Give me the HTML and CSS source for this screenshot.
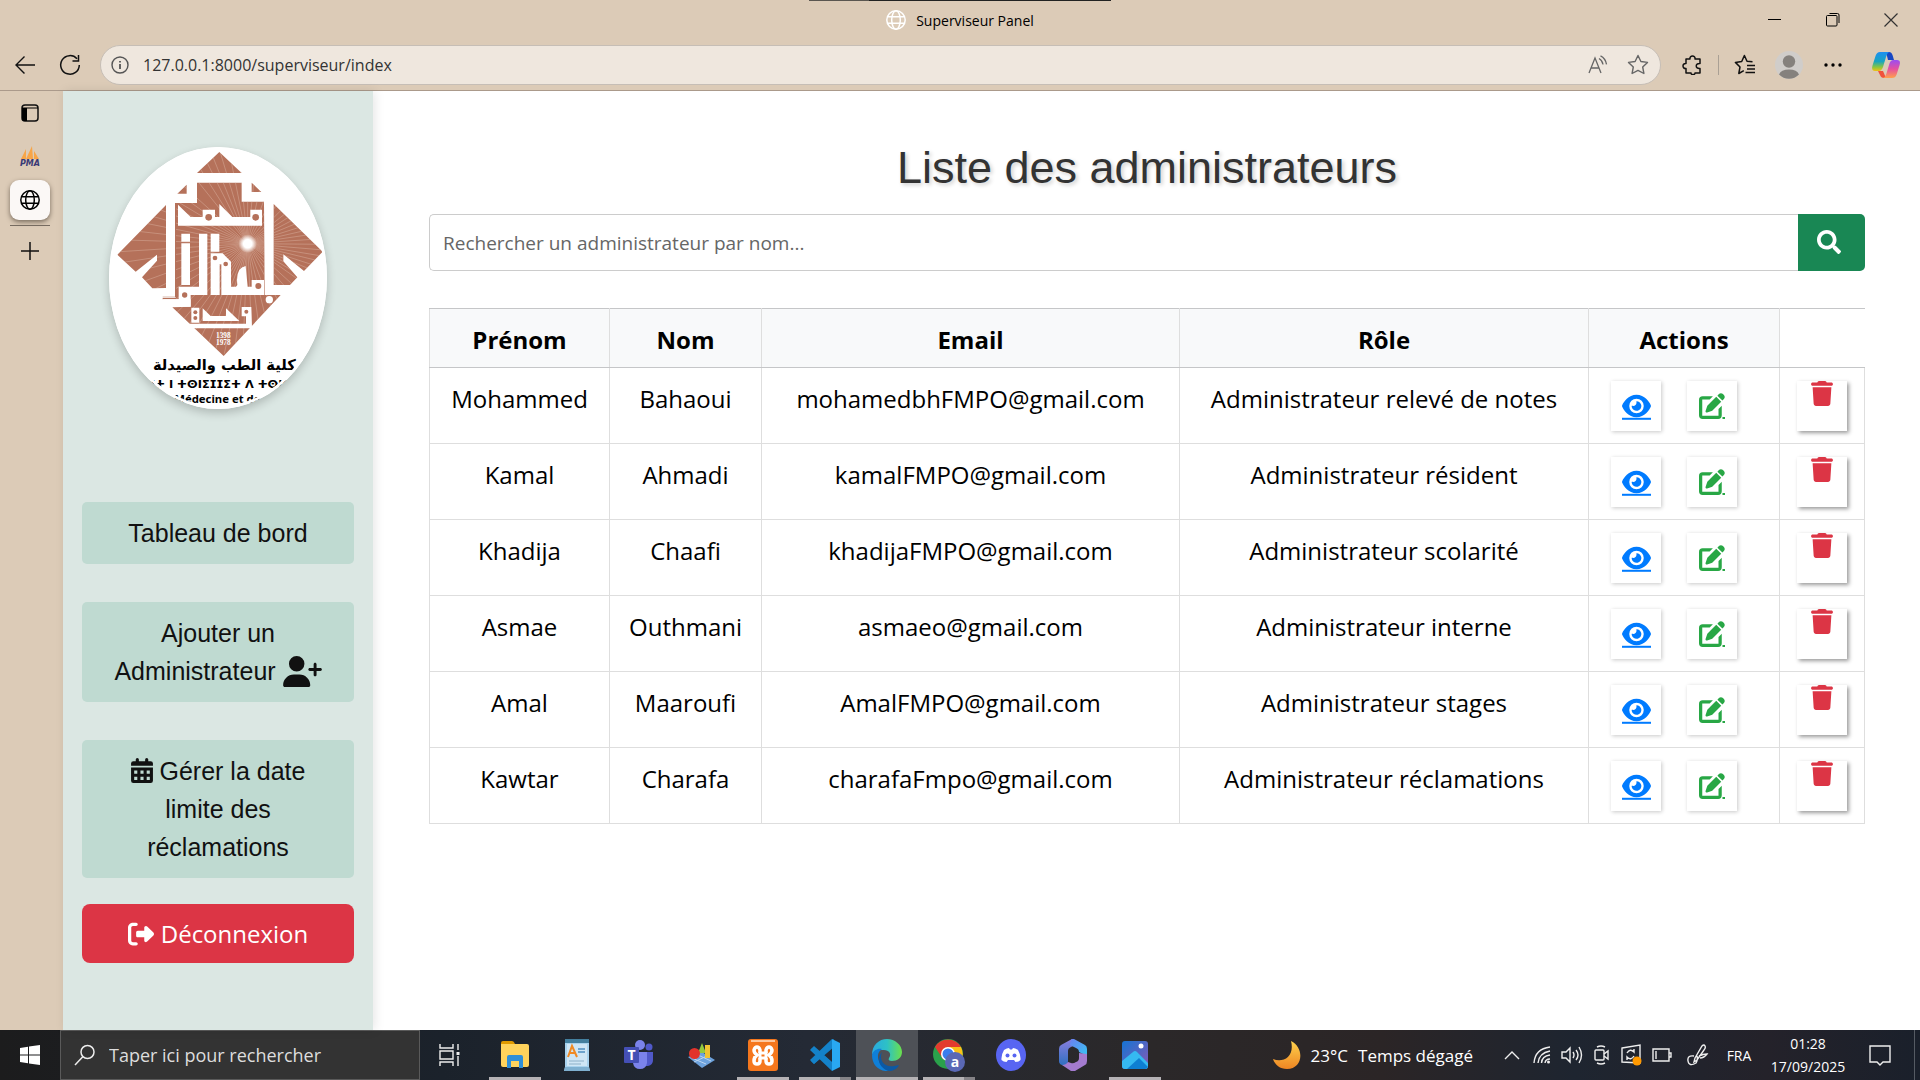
FILE: index.html
```html
<!DOCTYPE html>
<html lang="fr">
<head>
<meta charset="utf-8">
<meta name="viewport" content="width=device-width, initial-scale=1">
<title>Superviseur Panel</title>
<link rel="stylesheet" href="styles.css">
</head>
<body>
<svg class="sprite" aria-hidden="true">
  <symbol id="eye" viewBox="0 0 576 512"><path d="M288 32c-80.800 0-145.500 36.800-192.600 80.600C48.600 156 17.300 208 2.500 243.700c-3.300 7.900-3.300 16.700 0 24.600C17.300 304 48.600 356 95.400 399.400C142.500 443.200 207.200 480 288 480s145.500-36.800 192.600-80.600c46.800-43.500 78.100-95.400 93-131.100c3.300-7.900 3.300-16.700 0-24.600c-14.900-35.700-46.200-87.700-93-131.100C433.500 68.800 368.800 32 288 32zM144 256a144 144 0 1 1 288 0 144 144 0 1 1 -288 0zm144-64c0 35.300-28.700 64-64 64c-7.100 0-13.900-1.200-20.300-3.300c-5.500-1.800-11.900 1.600-11.700 7.400c.3 6.900 1.300 13.800 3.200 20.700c13.700 51.200 66.400 81.600 117.600 67.900s81.600-66.400 67.900-117.600c-11.100-41.500-47.800-69.400-88.600-71.100c-5.800-.2-9.200 6.100-7.400 11.700c2.100 6.400 3.300 13.200 3.300 20.300z"/><path d="M0 490h576v40H0z"/></symbol>
  <symbol id="edit" viewBox="0 0 512 512"><path d="M471.600 21.700c-21.900-21.900-57.300-21.900-79.200 0L362.300 51.700l97.900 97.900 30.100-30.100c21.900-21.900 21.900-57.300 0-79.200L471.600 21.700zm-299.200 220c-6.100 6.100-10.800 13.600-13.500 21.900l-29.600 88.800c-2.900 8.600-.6 18.100 5.800 24.600s15.900 8.700 24.600 5.800l88.800-29.600c8.200-2.700 15.700-7.400 21.900-13.500L437.700 172.300 339.700 74.300 172.400 241.700zM72 64Q0 64 0 136V440q0 72 72 72H376q72 0 72-72V250l-64 64V448H64V128H210l64-64z"/><path d="M462 472h50v40h-50z"/></symbol>
  <symbol id="trash" viewBox="0 0 448 512"><path d="M135.200 17.700L128 32H32C14.300 32 0 46.300 0 64S14.300 96 32 96H416c17.700 0 32-14.300 32-32s-14.300-32-32-32H320l-7.200-14.300C307.400 6.800 296.300 0 284.200 0H163.800c-12.100 0-23.200 6.800-28.600 17.700zM416 128H32L53.200 467c1.600 25.300 22.600 45 47.900 45H346.900c25.300 0 46.300-19.700 47.900-45L416 128z"/></symbol>
  <symbol id="globe" viewBox="0 0 20 20"><g fill="none" stroke="currentColor" stroke-width="1.500"><circle cx="10" cy="10" r="9.200"/><ellipse cx="10" cy="10" rx="4.300" ry="9.200"/><path d="M1.500 6.800h17M1.500 13.200h17"/></g></symbol>
</svg>

<header class="browser">
  <div class="titlebar">
    <div class="top-edge"></div>
    <div class="window-title"><svg width="20" height="20"><use href="#globe"/></svg><span>Superviseur Panel</span></div>
    <div class="window-controls">
      <button aria-label="Réduire"><svg width="14" height="14" viewBox="0 0 14 14"><path d="M0 6.500h13" stroke="#000"/></svg></button>
      <button aria-label="Restaurer"><svg width="14" height="14" viewBox="0 0 14 14" fill="none" stroke="#000"><rect x=".5" y="2.500" width="10.500" height="10.500" rx="1"/><path d="M3.500.5h8q1.500 0 1.500 1.500v8"/></svg></button>
      <button aria-label="Fermer"><svg width="14" height="14" viewBox="0 0 14 14"><path d="M.5.5l13 13M13.500.5l-13 13" stroke="#333" stroke-width="1.200"/></svg></button>
    </div>
  </div>
  <div class="toolbar">
    <button class="nav-back" aria-label="Retour"><svg width="22" height="20" viewBox="0 0 22 20" fill="none" stroke="#111" stroke-width="1.400"><path d="M21 10H2M10.500 1.500L2 10l8.500 8.500"/></svg></button>
    <button class="nav-reload" aria-label="Actualiser"><svg width="22" height="22" viewBox="0 0 22 22" fill="none" stroke="#111" stroke-width="1.500"><path d="M20.300 11a9.300 9.300 0 1 1-2.300-6.200M19.500 1v6h-6"/></svg></button>
    <div class="address">
      <svg width="18" height="18" viewBox="0 0 18 18" fill="none" stroke="#555" stroke-width="1.400"><circle cx="9" cy="9" r="8"/><path d="M9 8v5M9 5v1.600" stroke-width="1.800"/></svg>
      <input class="url" type="text" aria-label="Adresse" value="127.0.0.1:8000/superviseur/index">
      <button aria-label="Lecture à voix haute"><svg width="20" height="20" viewBox="0 0 20 20" fill="none" stroke="#666" stroke-width="1.300"><path d="M1 18L7 3l6 15M3 13h8M11 3.500q3.500 2 4 6M12.500.8q5 2.400 6 8.500"/></svg></button>
      <button aria-label="Ajouter aux favoris"><svg width="22" height="22" viewBox="0 0 22 22" fill="none" stroke="#666" stroke-width="1.400" stroke-linejoin="round"><path d="M11 1.500l2.900 6 6.600.9-4.800 4.600 1.200 6.500L11 16.400l-5.900 3.100L6.300 13 1.500 8.400l6.600-.9z"/></svg></button>
    </div>
    <div class="tools">
      <button aria-label="Extensions"><svg width="20" height="20" viewBox="0 0 20 20" fill="none" stroke="#111" stroke-width="1.500" stroke-linejoin="round"><path d="M4 4h4c-.7-4 5.700-4 5 0h5v4.500c-5-.6-5 5.600 0 5V18h-5c.5 2.200-4.500 2.200-4 0H4v-4.500c-4 .5-4-5.500 0-5z"/></svg></button>
      <span class="divider"></span>
      <button aria-label="Favoris"><svg width="22" height="22" viewBox="0 0 22 22" fill="none" stroke="#111" stroke-width="1.500" stroke-linejoin="round"><path d="M18.500 7.800L13 7.300l-2.600-5.800-2.700 6-6.300.9L6 13l-1.200 6.500 5-2.800M13 11.500h8M13 15h8M11.500 18.500H21"/></svg></button>
      <button aria-label="Profil"><svg width="28" height="28" viewBox="0 0 28 28"><circle cx="14" cy="14" r="14" fill="#d0cdca"/><circle cx="14" cy="10.500" r="6.200" fill="#85817d"/><path d="M4 23.500q2-5 10-5t10 5a14 14 0 0 1-20 0z" fill="#85817d"/></svg></button>
      <button aria-label="Paramètres"><svg width="18" height="4" viewBox="0 0 18 4"><circle cx="2" cy="2" r="1.700"/><circle cx="9" cy="2" r="1.700"/><circle cx="16" cy="2" r="1.700"/></svg></button>
      <button class="copilot" aria-label="Copilot"><svg width="28" height="27" viewBox="0 0 28 27">
        <defs><linearGradient id="cpA" x1="0" y1="0" x2="0" y2="1"><stop offset="0" stop-color="#1d8ff2"/><stop offset=".5" stop-color="#18a5c0"/><stop offset=".8" stop-color="#8cc63f"/><stop offset="1" stop-color="#f2c014"/></linearGradient><linearGradient id="cpB" x1="0" y1="0" x2="0" y2="1"><stop offset="0" stop-color="#9a4df2"/><stop offset=".5" stop-color="#e6509f"/><stop offset="1" stop-color="#ffa14d"/></linearGradient></defs>
        <path d="M14 0h3q2.500 0 3.500 3l1.500 5h-6z" fill="#1747c4"/><path d="M6 19h5l3 7h-2q-3 0-4-3z" fill="#f0523c"/>
        <path d="M8 0h9q-2 1-3 5l-3 10q-1.500 4-4 4H3q-4 0-2.500-5.500l3-9.500Q4.800 0 8 0z" fill="url(#cpA)"/>
        <path d="M20 26h-9q2.500-1 3.300-4l3-10q1.200-4 4-4H25q4 0 2.600 5l-3 9.500Q23.500 26 20 26z" fill="url(#cpB)"/></svg></button>
    </div>
  </div>
</header>

<div class="workspace">
  <nav class="tab-strip" aria-label="Onglets">
    <button aria-label="Menu des onglets"><svg width="18" height="18" viewBox="0 0 18 18"><rect x="1" y="1" width="16" height="16" rx="3" fill="none" stroke="#111" stroke-width="1.500"/><path d="M1 4h5v13H3q-2 0-2-2zM1 3.500h16v1H1z"/></svg></button>
    <button aria-label="phpMyAdmin"><svg width="22" height="22" viewBox="0 0 22 22"><path d="M7 3v10H2zM13 0l1 13H7zM15 5l5 8h-5z" fill="#f7a548"/><text x="11" y="20" text-anchor="middle" class="pma">PMA</text></svg></button>
    <button class="current-tab" aria-label="Superviseur Panel"><svg width="20" height="20"><use href="#globe"/></svg></button>
    <span class="tab-rule"></span>
    <button aria-label="Nouvel onglet"><svg width="18" height="18" viewBox="0 0 18 18" stroke="#111" stroke-width="1.500"><path d="M9 0v18M0 9h18"/></svg></button>
  </nav>

  <aside class="sidebar">
    <svg class="logo" viewBox="57 51 654 786" role="img" aria-label="Faculté de Médecine et de Pharmacie">
      <defs>
        <clipPath id="mark"><path d="M388 66l67 63H321zM257 219h64v-61h134v57h67l2 280h48L401 678 247 532l55-2v-22h-84v-4h39zM262 191l28-27v27zM485 158v28h29zM228 225L82 374l55 51 64-51v18l-45 50 31 33 41-1zM551 222l147 143-56 58-62-50v21l42 48-22 23h-49z"/></clipPath>
        <radialGradient id="sun"><stop offset=".45" stop-color="#fff"/><stop offset="1" stop-color="#fff" stop-opacity="0"/></radialGradient>
      </defs>
      <path fill="#fff" d="M57 51h654v786H57z"/>
      <g clip-path="url(#mark)">
        <path fill="#b5715a" d="M57 51h654v640H57z"/>
        <g stroke="#dfb9a8" stroke-width="1.300" transform="translate(473 341)">
          <path d="M0 0L-90-300M0 0L-60-300M0 0L-30-300M0 0L0-300M0 0L30-300M0 0L-120-300M0 0L-150-300M0 0L-190-300M0 0L-240-300M0 0L-300-270M0 0L-400-290M0 0L-400-240M0 0L-400-195M0 0L-400-155M0 0L-400-115M0 0L-400-80M0 0L-400-45M0 0L-400-12M0 0L-400 25M0 0L-400 60M0 0L-400 100M0 0L-400 145M0 0L-400 195M0 0L-400 250M0 0L-400 310M0 0L-340 330M0 0L-280 330M0 0L-240 330M0 0L-200 330M0 0L-165 330M0 0L-130 330M0 0L-100 330M0 0L-70 330M0 0L-40 330M0 0L-15 330M0 0L15 330M0 0L45 330M0 0L80 330M0 0L110 300M0 0L160 300M0 0L180 260M0 0L200 230M0 0L220 200M0 0L240 170M0 0L240 145M0 0L240 120M0 0L240 98M0 0L240 78M0 0L240 58M0 0L240 40M0 0L240 20M0 0L240 2M0 0L240-16M0 0L240-35M0 0L240-55M0 0L240-76M0 0L240-100M0 0L240-126M0 0L240-156M0 0L200-160M0 0L180-180M0 0L150-200M0 0L120-220M0 0L90-240M0 0L60-270"/>
        </g>
        <circle cx="473" cy="341" r="28" fill="url(#sun)"/>
      </g>
      <g fill="#fff">
        <path d="M264 224l38 37h36v-22h37v22h13v-39l39 39h54v-22h35v48H264zM274 311h26v24h-26zM274 340h26v125h-26zM327 311h25v184h-50v35h-55l-29-22h48v-38h61zM362 311h26v54h-26zM362 370h36l25 25v75h62v-20h37v45H394v-92h-32zM362 403h27v92h-27zM442 465q-6-52 25-57l6 62h-35z"/>
        <circle cx="538" cy="509" r="11"/>
        <path d="M304 533h24v45h-24zM338 535l24 23h46v-23l40 38H338zM455 531h29l2 64H300l-2-14h170v-22h-13z"/>
      </g>
      <g fill="#b5715a"><circle cx="356" cy="262" r="10"/><circle cx="497" cy="262" r="10"/><circle cx="375" cy="384" r="7"/><circle cx="407" cy="402" r="7"/><circle cx="505" cy="468" r="9"/><circle cx="284" cy="495" r="8"/><circle cx="316" cy="547" r="6"/><circle cx="316" cy="564" r="6"/><circle cx="469" cy="545" r="6"/><path d="M218 502h40V219h-3v281h-37z"/></g>
      <g text-anchor="middle">
        <text class="logo-year" x="400" y="624">1398</text><text class="logo-year" x="400" y="645">1978</text>
        <text class="logo-arabic" x="403" y="719">كلية الطب والصيدلة</text>
        <text class="logo-tifinagh" x="396" y="773">ⵏⵜ ⵏ ⵜⵙⵏⵉⵊⵊⵉⵜ ⴷ ⵜⵙⵏⵙ</text>
        <text class="logo-french" x="382" y="818">Médecine et de</text>
      </g>
      <ellipse cx="384" cy="444" rx="323" ry="389" fill="none" stroke="#fff" stroke-width="8"/>
    </svg>
    <nav class="menu">
      <a class="menu-item" href="#">Tableau de bord</a>
      <a class="menu-item" href="#">Ajouter un Administrateur <svg class="icon-user" viewBox="0 0 640 512"><path d="M96 128a128 128 0 1 1 256 0A128 128 0 1 1 96 128zM0 482.300C0 383.800 79.800 304 178.300 304h91.400C368.200 304 448 383.800 448 482.300c0 16.400-13.300 29.700-29.700 29.700H29.700C13.300 512 0 498.700 0 482.300zM504 312V248H440c-13.300 0-24-10.700-24-24s10.700-24 24-24h64V136c0-13.300 10.700-24 24-24s24 10.700 24 24v64h64c13.300 0 24 10.700 24 24s-10.700 24-24 24H552v64c0 13.300-10.700 24-24 24s-24-10.700-24-24z"/></svg></a>
      <a class="menu-item" href="#"><svg class="icon-calendar" viewBox="0 0 448 512"><path fill-rule="evenodd" d="M96 32q0-32 32-32t32 32v32h128V32q0-32 32-32t32 32v32h48q48 0 48 48v48H0v-48q0-48 48-48h48zM0 192h448v272q0 48-48 48H48q-48 0-48-48zM64 256v64h64v-64zM192 256v64h64v-64zM320 256v64h64v-64zM64 384v64h64v-64zM192 384v64h64v-64zM320 384v64h64v-64z"/></svg> Gérer la date limite des réclamations</a>
    </nav>
    <button class="logout"><svg class="icon-logout" viewBox="0 0 512 512"><path d="M377.900 105.900L500.700 228.700c7.200 7.200 11.300 17.100 11.300 27.300s-4.100 20.100-11.300 27.300L377.900 406.100c-6.400 6.400-15 9.900-24 9.900c-18.700 0-33.900-15.200-33.900-33.900l0-62.100-128 0c-17.700 0-32-14.300-32-32l0-64c0-17.700 14.300-32 32-32l128 0 0-62.100c0-18.700 15.200-33.900 33.900-33.900c9 0 17.600 3.600 24 9.900zM160 96L96 96c-17.700 0-32 14.300-32 32l0 256c0 17.700 14.300 32 32 32l64 0c17.700 0 32 14.300 32 32s-14.300 32-32 32l-64 0c-53 0-96-43-96-96L0 128C0 75 43 32 96 32l64 0c17.700 0 32 14.300 32 32s-14.300 32-32 32z"/></svg> Déconnexion</button>
  </aside>

  <main class="content">
    <h1>Liste des administrateurs</h1>
    <form class="search">
      <input type="text" aria-label="Rechercher un administrateur" placeholder="Rechercher un administrateur par nom...">
      <button type="button" aria-label="Rechercher"><svg width="24" height="24" viewBox="0 0 512 512"><path d="M505 442.700L405.300 343c-4.500-4.500-10.600-7-17-7H372c27.600-35.300 44-79.700 44-128C416 93.100 322.900 0 208 0S0 93.100 0 208s93.100 208 208 208c48.300 0 92.700-16.400 128-44v16.300c0 6.400 2.500 12.500 7 17l99.700 99.700c9.400 9.400 24.600 9.400 33.900 0l28.300-28.300c9.400-9.400 9.400-24.600.1-34zM208 336c-70.700 0-128-57.200-128-128 0-70.700 57.200-128 128-128 70.700 0 128 57.200 128 128 0 70.700-57.200 128-128 128z"/></svg></button>
    </form>
    <table class="admins">
      <colgroup><col class="col-first"><col class="col-last"><col><col class="col-role"><col class="col-actions"><col class="col-delete"></colgroup>
      <thead><tr><th>Prénom</th><th>Nom</th><th>Email</th><th>Rôle</th><th>Actions</th><td></td></tr></thead>
      <tbody>
        <tr><td>Mohammed</td><td>Bahaoui</td><td>mohamedbhFMPO@gmail.com</td><td>Administrateur relevé de notes</td><td><div class="actions"><a class="tile view" href="#" aria-label="Voir"><svg><use href="#eye"/></svg></a><a class="tile edit" href="#" aria-label="Modifier"><svg><use href="#edit"/></svg></a></div></td><td><button class="tile delete" aria-label="Supprimer"><svg><use href="#trash"/></svg></button></td></tr>
        <tr><td>Kamal</td><td>Ahmadi</td><td>kamalFMPO@gmail.com</td><td>Administrateur résident</td><td><div class="actions"><a class="tile view" href="#" aria-label="Voir"><svg><use href="#eye"/></svg></a><a class="tile edit" href="#" aria-label="Modifier"><svg><use href="#edit"/></svg></a></div></td><td><button class="tile delete" aria-label="Supprimer"><svg><use href="#trash"/></svg></button></td></tr>
        <tr><td>Khadija</td><td>Chaafi</td><td>khadijaFMPO@gmail.com</td><td>Administrateur scolarité</td><td><div class="actions"><a class="tile view" href="#" aria-label="Voir"><svg><use href="#eye"/></svg></a><a class="tile edit" href="#" aria-label="Modifier"><svg><use href="#edit"/></svg></a></div></td><td><button class="tile delete" aria-label="Supprimer"><svg><use href="#trash"/></svg></button></td></tr>
        <tr><td>Asmae</td><td>Outhmani</td><td>asmaeo@gmail.com</td><td>Administrateur interne</td><td><div class="actions"><a class="tile view" href="#" aria-label="Voir"><svg><use href="#eye"/></svg></a><a class="tile edit" href="#" aria-label="Modifier"><svg><use href="#edit"/></svg></a></div></td><td><button class="tile delete" aria-label="Supprimer"><svg><use href="#trash"/></svg></button></td></tr>
        <tr><td>Amal</td><td>Maaroufi</td><td>AmalFMPO@gmail.com</td><td>Administrateur stages</td><td><div class="actions"><a class="tile view" href="#" aria-label="Voir"><svg><use href="#eye"/></svg></a><a class="tile edit" href="#" aria-label="Modifier"><svg><use href="#edit"/></svg></a></div></td><td><button class="tile delete" aria-label="Supprimer"><svg><use href="#trash"/></svg></button></td></tr>
        <tr><td>Kawtar</td><td>Charafa</td><td>charafaFmpo@gmail.com</td><td>Administrateur réclamations</td><td><div class="actions"><a class="tile view" href="#" aria-label="Voir"><svg><use href="#eye"/></svg></a><a class="tile edit" href="#" aria-label="Modifier"><svg><use href="#edit"/></svg></a></div></td><td><button class="tile delete" aria-label="Supprimer"><svg><use href="#trash"/></svg></button></td></tr>
      </tbody>
    </table>
  </main>
</div>

<footer class="taskbar">
  <button class="start" aria-label="Démarrer"><svg width="20" height="20" viewBox="0 0 20 20" fill="#fff"><path d="M0 3l8-1.200v7.700H0zM9 1.600L20 0v9.500H9zM0 10.500h8v7.700L0 17zM9 10.500h11V20L9 18.400z"/></svg></button>
  <label class="task-search"><svg width="22" height="22" viewBox="0 0 22 22" fill="none" stroke="#eee" stroke-width="1.500"><circle cx="13.500" cy="8" r="6.500"/><path d="M9 12.500L1 21"/></svg><input type="text" aria-label="Recherche" placeholder="Taper ici pour rechercher"></label>
  <div class="apps">
    <button class="app task-view" aria-label="Vue des tâches"><svg width="22" height="24" viewBox="0 0 22 24" fill="none" stroke="#eee" stroke-width="1.400"><path d="M1 1v4h13V1M1 23v-4h13v4M1 8h13v8H1zM19 1v6M19 13v10"/><path d="M17.500 9h3v3h-3z" fill="#eee" stroke="none"/></svg></button>
    <button class="app open" aria-label="Explorateur"><svg width="28" height="28" viewBox="0 0 28 28"><path d="M0 2q0-2 2-2h9q2 0 3 3H0z" fill="#e09a00"/><path d="M0 3h26q2 0 2 2v19q0 2-2 2H2q-2 0-2-2z" fill="#ffd35c"/><path d="M6 27V16q0-2 2-2h12q2 0 2 2v11h-4v-7h-8v7z" fill="#2f8fd8"/></svg></button>
    <button class="app" aria-label="WordPad"><svg width="26" height="34" viewBox="0 0 26 34"><path d="M1 1h24v28l1 4H0l1-4z" fill="#a9d3ee"/><path d="M1 1h24v4H1z" fill="#437f9e"/><path d="M3 6h20v22H3z" fill="#cfe6f5"/><path d="M4 19L8 8l5 11M5.500 15h6" stroke="#f08a24" stroke-width="2" fill="none"/><path d="M14 11h7M14 14h7" stroke="#4f8fc0" stroke-width="1.500"/><path d="M5 23h15M5 26h12" stroke="#8db0c8"/><path d="M1 29h24l1 4H0z" fill="#7fb0d0"/></svg></button>
    <button class="app" aria-label="Teams"><svg width="30" height="30" viewBox="0 0 30 30"><circle cx="16" cy="5" r="5" fill="#7b83eb"/><circle cx="25" cy="7" r="3.500" fill="#5059c9"/><path d="M20 12h9v8q0 5-5 6h-4z" fill="#5059c9"/><path d="M9 12h14v11q-1 6-7 6t-7-6z" fill="#7b83eb"/><rect y="7" width="15" height="16" rx="1" fill="#444fb5"/><text x="7.500" y="20" class="glyph" text-anchor="middle">T</text></svg></button>
    <button class="app" aria-label="StarUML"><svg width="28" height="28" viewBox="0 0 28 28"><path d="M1 16l14-5 13 8-13 8z" fill="#6da2dc"/><path d="M5 17l14 6M11 14l13 6M7 21l15-7" stroke="#bcd5f0"/><path d="M11 12l4-10 4 10z" fill="#94c93d"/><circle cx="7.500" cy="12.500" r="5.500" fill="#e2332c"/><path d="M18 4h5v13h-5z" fill="#f2c231"/></svg></button>
    <button class="app open" aria-label="XAMPP"><svg width="30" height="32" viewBox="0 0 30 32"><rect width="30" height="32" rx="3" fill="#f5771d"/><path d="M3 2h24" stroke="#ffc79b" stroke-width="2"/><path d="M12 16v-2h6v2M12 16v3h6v-3" fill="none" stroke="#fff" stroke-width="3"/><path d="M12 14V11Q11 8 9 8T6 11q0 3 3 5-3 2-3 6 0 3 3 3t3-3v-3M18 14V11q1-3 3-3t3 3q0 3-3 5 3 2 3 6 0 3-3 3t-3-3v-3" fill="none" stroke="#fff" stroke-width="3.500"/></svg></button>
    <button class="app open multi" aria-label="Visual Studio Code"><svg width="30" height="32" viewBox="0 0 30 32"><path d="M1 10l3-2 20 17v6L2 12zM1 22l3 3L24 8V0L2 20z" fill="#0b7cc4"/><path d="M22 0l8 4v24l-8 4z" fill="#29a8f2"/><path d="M0 21l22-21v9L4 25zM0 11l4-4 18 16v9z" fill="#1482c9"/></svg></button>
    <button class="app open active" aria-label="Edge"><svg width="30" height="32" viewBox="0 0 30 32"><defs><linearGradient id="edge"><stop offset="0" stop-color="#2aa9e0"/><stop offset=".5" stop-color="#2dc1c6"/><stop offset="1" stop-color="#6be04b"/></linearGradient></defs><path d="M0 16C0 6 7 0 15 0s15 6 15 13c0 6-5 9-10 9-3 0-4-1-3-3 3-4 0-8-5-8C6 11 1 13 0 16z" fill="url(#edge)"/><path d="M0 16c1-5 6-7 10-6-5 3-5 9-2 14 2 4 6 7 9 8C7 33 0 26 0 16z" fill="#0f7fd8"/><path d="M10 13c-4 9 4 16 12 14 2 0 4-1 5-1-2 4-6 6-10 6C9 30 3 21 10 13z" fill="#0c59a4"/></svg></button>
    <button class="app open multi" aria-label="Chrome"><svg width="32" height="34" viewBox="0 0 32 34"><circle cx="15" cy="16" r="15" fill="#2aa14b"/><path d="M2 9A15 15 0 0 1 28 9H15z" fill="#e33b2e"/><path d="M2 9l8 12 5-12z" fill="#e33b2e"/><path d="M15 9h13a15 15 0 0 1-13 22l7-12z" fill="#fbc116"/><circle cx="15" cy="16" r="7" fill="#fff"/><circle cx="15" cy="16" r="5.500" fill="#3b7ded"/><circle cx="22" cy="24" r="10" fill="#5a68b5"/><text x="22" y="29" class="glyph" text-anchor="middle">a</text></svg></button>
    <button class="app" aria-label="Discord"><svg width="30" height="32" viewBox="0 0 30 32"><ellipse cx="15" cy="16" rx="15" ry="16" fill="#5865f2"/><path d="M8 11q3-2 5-2l1 1.500h2L17 9q2 0 5 2 3 5 2.500 10-2 2-5 2l-1.500-2h-6l-1.500 2q-3 0-5-2Q5 16 8 11z" fill="#fff"/><circle cx="11.500" cy="16.500" r="2" fill="#5865f2"/><circle cx="18.500" cy="16.500" r="2" fill="#5865f2"/></svg></button>
    <button class="app" aria-label="Microsoft 365"><svg width="28" height="32" viewBox="0 0 28 32"><defs><linearGradient id="m3" x1="0" y1="0" x2="1" y2="1"><stop offset="0" stop-color="#6b7ff0"/><stop offset="1" stop-color="#36c5f4"/></linearGradient><linearGradient id="m4" x1="0" y1="0" x2="0" y2="1"><stop offset="0" stop-color="#8a7fe0"/><stop offset="1" stop-color="#2f6fc0"/></linearGradient></defs><path d="M13 0L2 6Q0 7 0 10v12q0 3 3 4 6 2 6-4V12q0-3 3-4l6-3z" fill="url(#m4)"/><path d="M13 0h2l11 6q2 1 2 4v7l-8-4q0-3-3-4l-6-3q0-5 2-6z" fill="url(#m3)"/><path d="M28 15v7q0 3-2 4l-10 6q-2 1-4 0L3 26q4 0 6-3l3 1q2 1 5-1 3-1 3-4v-5z" fill="#a47bcf"/></svg></button>
    <button class="app open" aria-label="Photos"><svg width="26" height="28" viewBox="0 0 26 28"><defs><linearGradient id="ph" x1="0" y1="0" x2="1" y2="1"><stop offset="0" stop-color="#1474d4"/><stop offset="1" stop-color="#8a59b5"/></linearGradient></defs><rect width="26" height="28" rx="3" fill="url(#ph)"/><path d="M0 20l11-9q2-2 4 0l11 11v3q0 3-3 3H3q-3 0-3-3z" fill="#35b9f1"/><path d="M5 28l12-11 9 9q-1 2-3 2z" fill="#0e7fd2"/><circle cx="19" cy="5" r="2.500" fill="#fff"/></svg></button>
  </div>
  <button class="weather"><svg width="28" height="28" viewBox="0 0 28 28"><defs><linearGradient id="moon" x1="0" y1="0" x2="0" y2="1"><stop offset="0" stop-color="#ffd24d"/><stop offset="1" stop-color="#ee8523"/></linearGradient></defs><path d="M18 0c14 7 12 28-4 28C7 28 2 24 0 18c10 4 22-2 18-18z" fill="url(#moon)"/></svg><span>23°C</span><span>Temps dégagé</span></button>
  <div class="tray">
    <button aria-label="Icônes masquées"><svg width="16" height="10" viewBox="0 0 16 10"><path d="M1 9l7-7 7 7"/></svg></button>
    <button aria-label="Réseau"><svg width="18" height="20" viewBox="0 0 18 20"><path d="M1 18Q2 4 17 2M5 18Q6 8 17 6M8.500 18Q9 11 17 10M12 18q.500-4 5-4"/><circle cx="15.500" cy="17" r="1.500" class="dot"/></svg></button>
    <button aria-label="Volume"><svg width="22" height="18" viewBox="0 0 22 18"><path d="M1 6h4l4-4v14l-4-4H1zM12 6q2 3 0 6M15 4q4 5 0 10M18 1q5 8 0 16"/></svg></button>
    <button aria-label="Caméra"><svg width="16" height="20" viewBox="0 0 16 20"><rect x="1" y="5" width="9" height="10" rx="1"/><path d="M10 9l4-3v8l-4-3M3 2q4-2 8 0M3 18q4 2 8 0"/></svg></button>
    <button aria-label="Mises à jour"><svg width="22" height="22" viewBox="0 0 22 22"><path d="M1 4l18-3v18L1 18zM6 9q3-5 7-1V5M13 12q-3 5-7 1v3"/><circle cx="16" cy="17" r="4.500" fill="#f90" stroke="none"/></svg></button>
    <button aria-label="Batterie"><svg width="20" height="16" viewBox="0 0 20 16"><path d="M1 2h16v12H1zM17 6h2v4h-2M4 4v8"/></svg></button>
    <button class="pen" aria-label="Stylet"><svg width="22" height="22" viewBox="0 0 22 22"><path d="M8 14L15 2q2-2 3 0t-1 4l-7 10-3 2zM7 12q-7-1-6 5t8 2q2-3 1-7M12 12q4-2 8-2-3 4-7 4"/></svg></button>
    <span class="language">FRA</span>
    <div class="clock"><span>01:28</span><span>17/09/2025</span></div>
    <button class="notifications" aria-label="Notifications"><svg width="22" height="22" viewBox="0 0 22 22"><path d="M1 2h20v16h-7l-3 3-3-3H1z"/></svg></button>
  </div>
</footer>
</body>
</html>
```
FILE: styles.css
```css
* { box-sizing: border-box; }
body {
  margin: 0;
  min-height: 100vh;
  display: flex;
  flex-direction: column;
  font-family: "Open Sans", "Noto Sans", sans-serif;
  color: #000;
  background: #dccbb7;
}
button { border: 0; padding: 0; background: none; font: inherit; color: inherit; display: flex; align-items: center; justify-content: center; }
input { border: 0; padding: 0; background: none; font: inherit; color: inherit; min-width: 0; outline: 0; }
a { color: inherit; text-decoration: none; }
.sprite { display: none; }

/* Browser chrome */
.browser { border-bottom: 1px solid #ab9a8b; }
.titlebar { display: grid; grid-template-columns: 1fr auto 1fr; align-items: center; height: 40px; position: relative; }
.top-edge { position: absolute; top: 0; left: 50%; width: 302px; height: 1px; margin-left: -151px; background: linear-gradient(90deg, #5a5650 60px, #222 60px); }
.window-title { grid-column: 2; display: flex; align-items: center; gap: 10px; font-size: 14px; }
.window-title svg { color: #fff; }
.window-controls { display: flex; justify-content: flex-end; }
.window-controls button { width: 58px; height: 40px; }
.toolbar { display: flex; align-items: center; height: 50px; padding-right: 12px; }
.nav-back { width: 50px; }
.nav-reload { width: 40px; margin-right: 10px; }
.address { flex: 1; display: flex; align-items: center; height: 40px; padding: 0 2px 0 10px; border: 1px solid #c6beb6; border-radius: 20px; background: #efe7de; }
.url { flex: 1; margin-left: 14px; font-size: 16px; color: #333; }
.address button { width: 40px; }
.tools { display: flex; align-items: center; margin-left: 9px; }
.tools button { width: 44px; }
.divider { width: 1px; height: 20px; margin: 0 4px; background: #aaa094; }
.tools .copilot { margin-left: 9px; }

/* Page area */
.workspace { flex: 1; display: flex; }
.tab-strip { width: 63px; padding: 0 5px 0 10px; display: flex; flex-direction: column; align-items: flex-start; }
.tab-strip button { width: 40px; height: 44px; }
.tab-strip .current-tab { height: 40px; margin-top: 1px; border-radius: 9px; background: #fbf8f6; box-shadow: 0 2px 5px #776a5c; }
.tab-rule { width: 40px; height: 1px; margin: 5px 0 3px; background: #766b60; }
.pma { font: italic bold 8px "DejaVu Sans", sans-serif; fill: #3a3a75; }

.sidebar { position: relative; width: 310px; padding: 56px 19px 40px; display: flex; flex-direction: column; background: #dbe7e3; box-shadow: 2px 0 10px rgba(0, 0, 0, .1); }
.logo { width: 218px; height: 262px; align-self: center; border-radius: 50%; box-shadow: 0 4px 10px rgba(0, 0, 0, .2); }
.logo-year { font: bold 22px "Liberation Serif", serif; fill: #fff; }
.logo-arabic { font: bold 44px "DejaVu Sans", sans-serif; }
.logo-tifinagh { font: bold 34px "DejaVu Sans", sans-serif; }
.logo-french { font: bold 34px "Noto Sans", sans-serif; }
.menu { display: flex; flex-direction: column; gap: 38px; margin: 93px 0 26px; }
.menu-item { padding: 12px 20px; border-radius: 5px; background: #bfdad1; color: #111; font: 25px/38px "Liberation Sans", sans-serif; text-align: center; }
.menu-item svg, .logout svg { fill: currentColor; }
.icon-user { width: 39px; height: 31px; vertical-align: -7px; }
.icon-calendar { width: 22px; height: 25px; vertical-align: -3px; }
.logout { height: 59px; gap: 7px; border-radius: 8px; background: #dc3545; color: #fff; font-size: 24px; }
.icon-logout { width: 26px; height: 26px; }

.content { flex: 1; padding: 50px 55px 40px 56px; background: #fff; }
h1 { margin: 0 0 19px; font: 45px/54px "Liberation Sans", sans-serif; color: #333; text-align: center; text-shadow: 2px 2px 4px rgba(0, 0, 0, .2); }
.search { display: flex; height: 57px; margin-bottom: 37px; }
.search input { flex: 1; padding: 0 13px; border: 1px solid #ccc; border-right: 0; border-radius: 5px 0 0 5px; font-size: 19px; }
.search input::placeholder { color: #666; opacity: 1; }
.search button { width: 67px; padding-right: 5px; padding-bottom: 2px; border-radius: 0 5px 5px 0; background: #198754; fill: #fff; }

.admins { width: 100%; border-collapse: collapse; table-layout: fixed; font-size: 24px; line-height: 37px; text-align: center; }
.col-first { width: 180px; }
.col-last { width: 152px; }
.col-role { width: 409px; }
.col-actions { width: 191px; }
.col-delete { width: 85px; }
.admins td, .admins th { padding: 12px 0; border: 1px solid #dedede; vertical-align: top; }
.admins th { padding-bottom: 9px; background: #f8f9fa; font-weight: 700; }
.admins thead th, .admins thead td { border-top-color: #c5c6c8; border-bottom-color: #c5c6c8; }
.admins thead td { border-right: 0; }
.admins tbody td:nth-child(n+5) { padding: 13px 17px 12px; }
.actions { display: flex; gap: 26px; padding-left: 5px; }
.tile { width: 50px; height: 50px; display: flex; align-items: center; justify-content: center; background: #fff; box-shadow: 1px 1px 4px rgba(0, 0, 0, .22); }
.tile svg { fill: currentColor; overflow: visible; }
.view { color: #007bff; }
.view svg { width: 29px; height: 26px; }
.edit { color: #28a745; }
.edit svg { width: 26px; height: 26px; }
.delete { align-items: flex-start; color: #dc3545; box-shadow: 2px 2px 4px rgba(0, 0, 0, .4); }
.delete svg { width: 22px; height: 25px; }
#eye { overflow: visible; }

/* Taskbar */
.taskbar { display: flex; height: 50px; color: #fff; background: linear-gradient(90deg, #1c1c1d, #1b222b 23%, #242a35 42%, #2b2829 60%, #2b2526 72%, #1e2530 82%, #24222a 92%, #1a202b); }
.start { width: 60px; }
.task-search { width: 360px; display: flex; align-items: center; gap: 13px; padding-left: 13px; border: 1px solid #5a5a5a; background: #333; }
.task-search input { flex: 1; font-size: 18px; }
.task-search input::placeholder { color: #ddd; opacity: 1; }
.apps { display: flex; }
.app { width: 62px; border-bottom: 3px solid transparent; padding-top: 3px; }
.app.task-view { width: 64px; padding-right: 4px; }
.app.open { border-image: linear-gradient(90deg, transparent 5px, #b5b2b5 5px 57px, transparent 57px) 0 0 3; }
.app.multi { border-image: linear-gradient(90deg, transparent 5px, #b5b2b5 5px 46px, #858387 46px 57px, transparent 57px) 0 0 3; }
.app.active { background: #4e5157; border-image: none; border-bottom-color: #b5b2b5; }
.glyph { font: bold 14px "Open Sans", sans-serif; fill: #fff; }
.weather { margin-left: auto; gap: 10px; font-size: 17px; }
.tray { display: flex; align-items: center; margin-left: 24px; padding-right: 5px; }
.tray button { width: 30px; }
.tray svg { fill: none; stroke: #eee; stroke-width: 1.400; }
.tray .dot { fill: #eee; stroke: none; }
.tray .pen { width: 42px; }
.language { width: 40px; font-size: 14px; text-align: center; }
.clock { width: 94px; margin-left: 2px; display: flex; flex-direction: column; align-items: center; font-size: 14px; line-height: 23px; }
.tray .notifications { width: 60px; height: 50px; border-right: 1px solid #555b63; padding-right: 10px; }
```
